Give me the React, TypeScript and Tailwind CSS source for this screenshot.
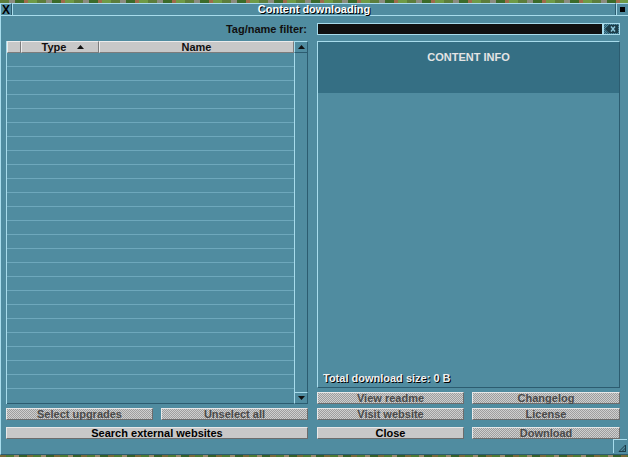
import React from 'react';

const rows = Array.from({ length: 25 }, (_, i) => i);

const Btn = ({ label, enabled = false }: { label: string; enabled?: boolean }) => (
  <div
    className={`h-[12px] flex items-center justify-center border-t border-l border-t-[#e8e8e8] border-l-[#e8e8e8] border-b border-r border-b-[#6c6c6c] border-r-[#6c6c6c] text-[11px] leading-[11px] font-bold ${
      enabled
        ? 'bg-[#c8c8c8] text-black'
        : 'bg-[repeating-conic-gradient(#cfcfcf_0_25%,#9e9e9e_0_50%)] bg-[length:2px_2px] text-[#4a4a4a]'
    }`}
  >
    {label}
  </div>
);

export default function App() {
  return (
    <div
      className="w-[628px] h-[457px] overflow-hidden bg-[#508ca0] flex flex-col select-none"
      style={{ fontFamily: '"Liberation Sans", Arial, sans-serif' }}
    >
      {/* game world peeking above */}
      <div className="h-[3px] shrink-0 bg-[repeating-linear-gradient(90deg,#5d7d3c_0_9px,#8c8c80_9px_15px,#3c6a2a_15px_24px,#a06a4a_24px_28px,#6f9a46_28px_37px)]" />

      {/* title bar */}
      <div className="h-[13px] shrink-0 flex border-b border-[#a8dcec]">
        <div className="w-[12px] flex items-center justify-center border-t border-l border-[#a8dcec] border-r border-r-[#2c5c70] text-[12px] font-bold leading-none text-black">
          X
        </div>
        <div className="flex-1 flex items-center justify-center border-t border-l border-[#a8dcec] border-r border-r-[#2c5c70] text-[11px] font-bold leading-none text-white [text-shadow:1px_1px_0_#000]">
          Content downloading
        </div>
        <div className="w-[12px] flex items-center justify-center border-t border-l border-[#a8dcec]">
          <div className="w-[5px] h-[5px] bg-black" />
        </div>
      </div>

      {/* body */}
      <div className="flex-1 relative pl-[5px] pt-[7px] border-b border-[#2c5c70] border-l border-l-[#a8dcec]">
        {/* filter row */}
        <div className="grid grid-cols-[302px_303px] gap-x-[9px] h-[12px]">
          <div className="text-right text-[11px] font-bold leading-[12px] text-[#101010] pr-[1px]">Tag/name filter:</div>
          <div className="flex">
            <div className="flex-1 bg-[#101010] border border-[#a8dcec]" />
            <div className="w-[17px] bg-[repeating-conic-gradient(#2c5c70_0_25%,#508ca0_0_50%)] bg-[length:2px_2px] border border-[#a8dcec] flex items-center justify-center">
              <svg width="13" height="8" viewBox="0 0 13 8">
                <path d="M0 4 L4 0 H13 V8 H4 Z" fill="#1c3c48" />
                <path d="M6 1.5 L10 6.5 M10 1.5 L6 6.5" stroke="#8cc8dc" strokeWidth="1.4" />
              </svg>
            </div>
          </div>
        </div>

        {/* main area */}
        <div className="grid grid-cols-[302px_303px] gap-x-[9px] mt-[6px] h-[363px]">
          {/* list */}
          <div className="flex h-full">
            <div className="flex-1 flex flex-col border-l border-[#a8dcec]">
              <div className="h-[12px] flex text-[11px] font-bold leading-[11px] text-[#101010]">
                <div className="w-[14px] bg-[#c8c8c8] border-t border-l border-[#ececec] border-r border-r-[#7c7c7c] border-b border-b-[#7c7c7c]" />
                <div className="w-[78px] bg-[#c8c8c8] border-t border-l border-[#ececec] border-r border-r-[#7c7c7c] border-b border-b-[#7c7c7c] flex items-center justify-center gap-[11px] pl-[6px]">
                  <span>Type</span>
                  <svg width="7" height="4" viewBox="0 0 7 4">
                    <path d="M3.5 0 L7 4 H0 Z" fill="#101010" />
                  </svg>
                </div>
                <div className="flex-1 bg-[#c8c8c8] border-t border-l border-[#ececec] border-r border-r-[#7c7c7c] border-b border-b-[#7c7c7c] flex items-center justify-center">
                  Name
                </div>
              </div>
              <div className="flex-1 flex flex-col border-b border-[#2c5c70]">
                {rows.map((r) => (
                  <div key={r} className="h-[14px] shrink-0 border-b border-[#6ea8bc] last:border-b-0" />
                ))}
              </div>
            </div>
            {/* scrollbar */}
            <div className="w-[14px] flex flex-col">
              <div className="h-[12px] border-t border-l border-[#a8dcec] border-r border-b border-r-[#2c5c70] border-b-[#2c5c70] flex items-center justify-center">
                <svg width="7" height="4" viewBox="0 0 7 4">
                  <path d="M3.5 0 L7 4 H0 Z" fill="#101010" />
                </svg>
              </div>
              <div className="flex-1 border-l border-[#a8dcec] border-r border-r-[#2c5c70]" />
              <div className="h-[12px] border-t border-l border-[#a8dcec] border-r border-b border-r-[#2c5c70] border-b-[#2c5c70] flex items-center justify-center">
                <svg width="7" height="4" viewBox="0 0 7 4">
                  <path d="M0 0 H7 L3.5 4 Z" fill="#101010" />
                </svg>
              </div>
            </div>
          </div>

          {/* info panel + first button row */}
          <div className="flex flex-col h-full">
            <div className="flex-1 flex flex-col border-t border-l border-[#a8dcec] border-r border-b border-r-[#2c5c70] border-b-[#2c5c70]">
              <div className="h-[51px] bg-[#356f84] flex justify-center pt-[9px] text-[11px] font-bold leading-[12px] text-[#e4e4e4]">
                CONTENT INFO
              </div>
              <div className="flex-1 flex items-end pl-[5px] pb-[3px] text-[11px] font-bold leading-[12px] text-[#f0f0f0] [text-shadow:1px_1px_0_#000]">
                Total download size: 0 B
              </div>
            </div>
            <div className="grid grid-cols-[147px_148px] gap-x-[8px] mt-[4px]">
              <Btn label="View readme" />
              <Btn label="Changelog" />
            </div>
          </div>
        </div>

        {/* second button row */}
        <div className="grid grid-cols-[302px_303px] gap-x-[9px] mt-[4px]">
          <div className="grid grid-cols-[147px_147px] gap-x-[8px]">
            <Btn label="Select upgrades" />
            <Btn label="Unselect all" />
          </div>
          <div className="grid grid-cols-[147px_148px] gap-x-[8px]">
            <Btn label="Visit website" />
            <Btn label="License" />
          </div>
        </div>

        {/* third button row */}
        <div className="grid grid-cols-[302px_303px] gap-x-[9px] mt-[7px]">
          <Btn label="Search external websites" enabled />
          <div className="grid grid-cols-[147px_148px] gap-x-[8px]">
            <Btn label="Close" enabled />
            <Btn label="Download" />
          </div>
        </div>

        {/* resize box */}
        <div className="absolute right-[1px] bottom-[1px] w-[14px] h-[14px] border-t border-l border-[#a8dcec] flex items-end justify-end p-[1px]">
          <svg width="8" height="8" viewBox="0 0 8 8">
            <path d="M7.5 1 V7.5 H1 M7.5 4 V7.5 H4" fill="none" stroke="#1c3c48" strokeWidth="1" />
            <path d="M1 7.5 L7.5 1 M4 7.5 L7.5 4" stroke="#1c3c48" strokeWidth="1" />
          </svg>
        </div>
      </div>

      {/* game world below */}
      <div className="h-[2px] shrink-0 bg-[repeating-linear-gradient(90deg,#7a6a3a_0_6px,#4f7a34_6px_14px,#9a8a6a_14px_19px,#36602a_19px_27px)]" />
    </div>
  );
}
